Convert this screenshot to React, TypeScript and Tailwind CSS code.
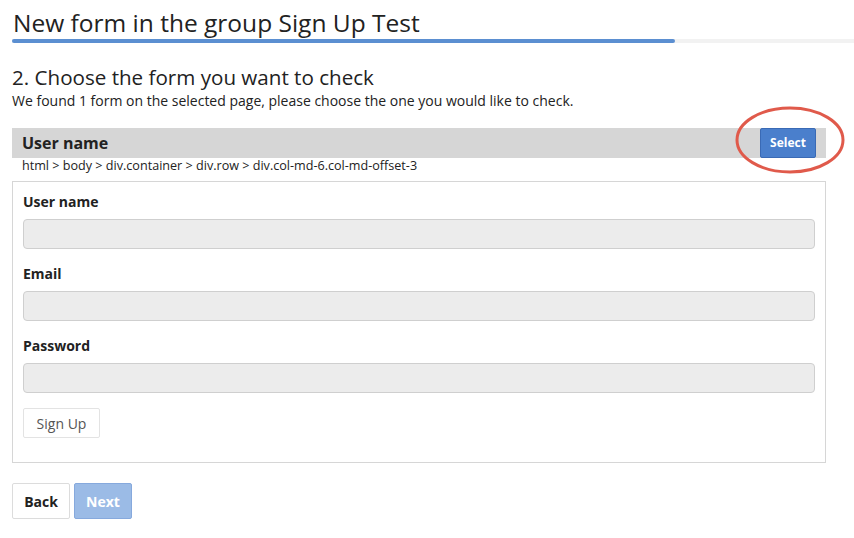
import React from "react";

export default function App() {
  const font = { fontFamily: '"Open Sans", "Liberation Sans", sans-serif' };
  return (
    <div className="min-h-[538px] w-[854px] bg-white pl-[12px] text-[#222]" style={font}>
      <div className="pt-[8px]">
        <h1 className="pl-[1px] text-[24.5px] font-[500] leading-[30px] text-[#222]">New form in the group Sign Up Test</h1>
        <div className="mt-[1px] flex h-[4px] w-full bg-[#f2f2f2]">
          <div className="h-full w-[663px] rounded-[2px] bg-[#5b8fd1]" />
        </div>
      </div>

      <div className="w-[814px]">
        <h2 className="mt-[21px] text-[20.6px] leading-[26px] text-[#222]">2. Choose the form you want to check</h2>
        <p className="mt-[2px] text-[14px] leading-[18px] text-[#222]">We found 1 form on the selected page, please choose the one you would like to check.</p>

        <div className="relative mt-[18px] flex h-[30px] items-center justify-between bg-[#d6d6d6] pl-[10px] pr-[10px]">
          <span className="text-[16px] font-bold text-[#222]">User name</span>
          <button className="h-[30px] w-[56px] rounded-[2px] border border-[#3a6ab5] bg-[#4a7fcc] text-[12px] font-bold text-white">Select</button>
          <svg className="pointer-events-none absolute left-[722px] top-[-23px]" width="112" height="70" viewBox="0 0 112 70">
            <ellipse cx="56" cy="35" rx="53" ry="32" fill="none" stroke="#e05a4b" strokeWidth="3" />
          </svg>
        </div>
        <div className="pl-[10px] text-[12.6px] leading-[16px] text-[#222]">html &gt; body &gt; div.container &gt; div.row &gt; div.col-md-6.col-md-offset-3</div>

        <div className="mt-[7px] border border-[#d6d6d6] px-[10px] pb-[24px] pt-[10px]">
          {["User name", "Email", "Password"].map((l) => (
            <div key={l} className="mb-[15px]">
              <div className="text-[14px] font-bold leading-[20px] text-[#222]">{l}</div>
              <div className="mt-[7px] h-[30px] w-full rounded-[4px] border border-[#cfcfcf] bg-[#ececec]" />
            </div>
          ))}
          <button className="h-[30px] w-[77px] rounded-[2px] border border-[#e3e3e3] bg-white text-[14px] text-[#555]">Sign Up</button>
        </div>

        <div className="mt-[20px] flex gap-[4px]">
          <button className="h-[36px] w-[58px] rounded-[2px] border border-[#dcdcdc] bg-white text-[14px] font-bold text-[#222]">Back</button>
          <button className="h-[36px] w-[58px] rounded-[2px] border border-[#86a9dd] bg-[#9bbbe6] text-[14px] font-bold text-white">Next</button>
        </div>
      </div>
    </div>
  );
}
